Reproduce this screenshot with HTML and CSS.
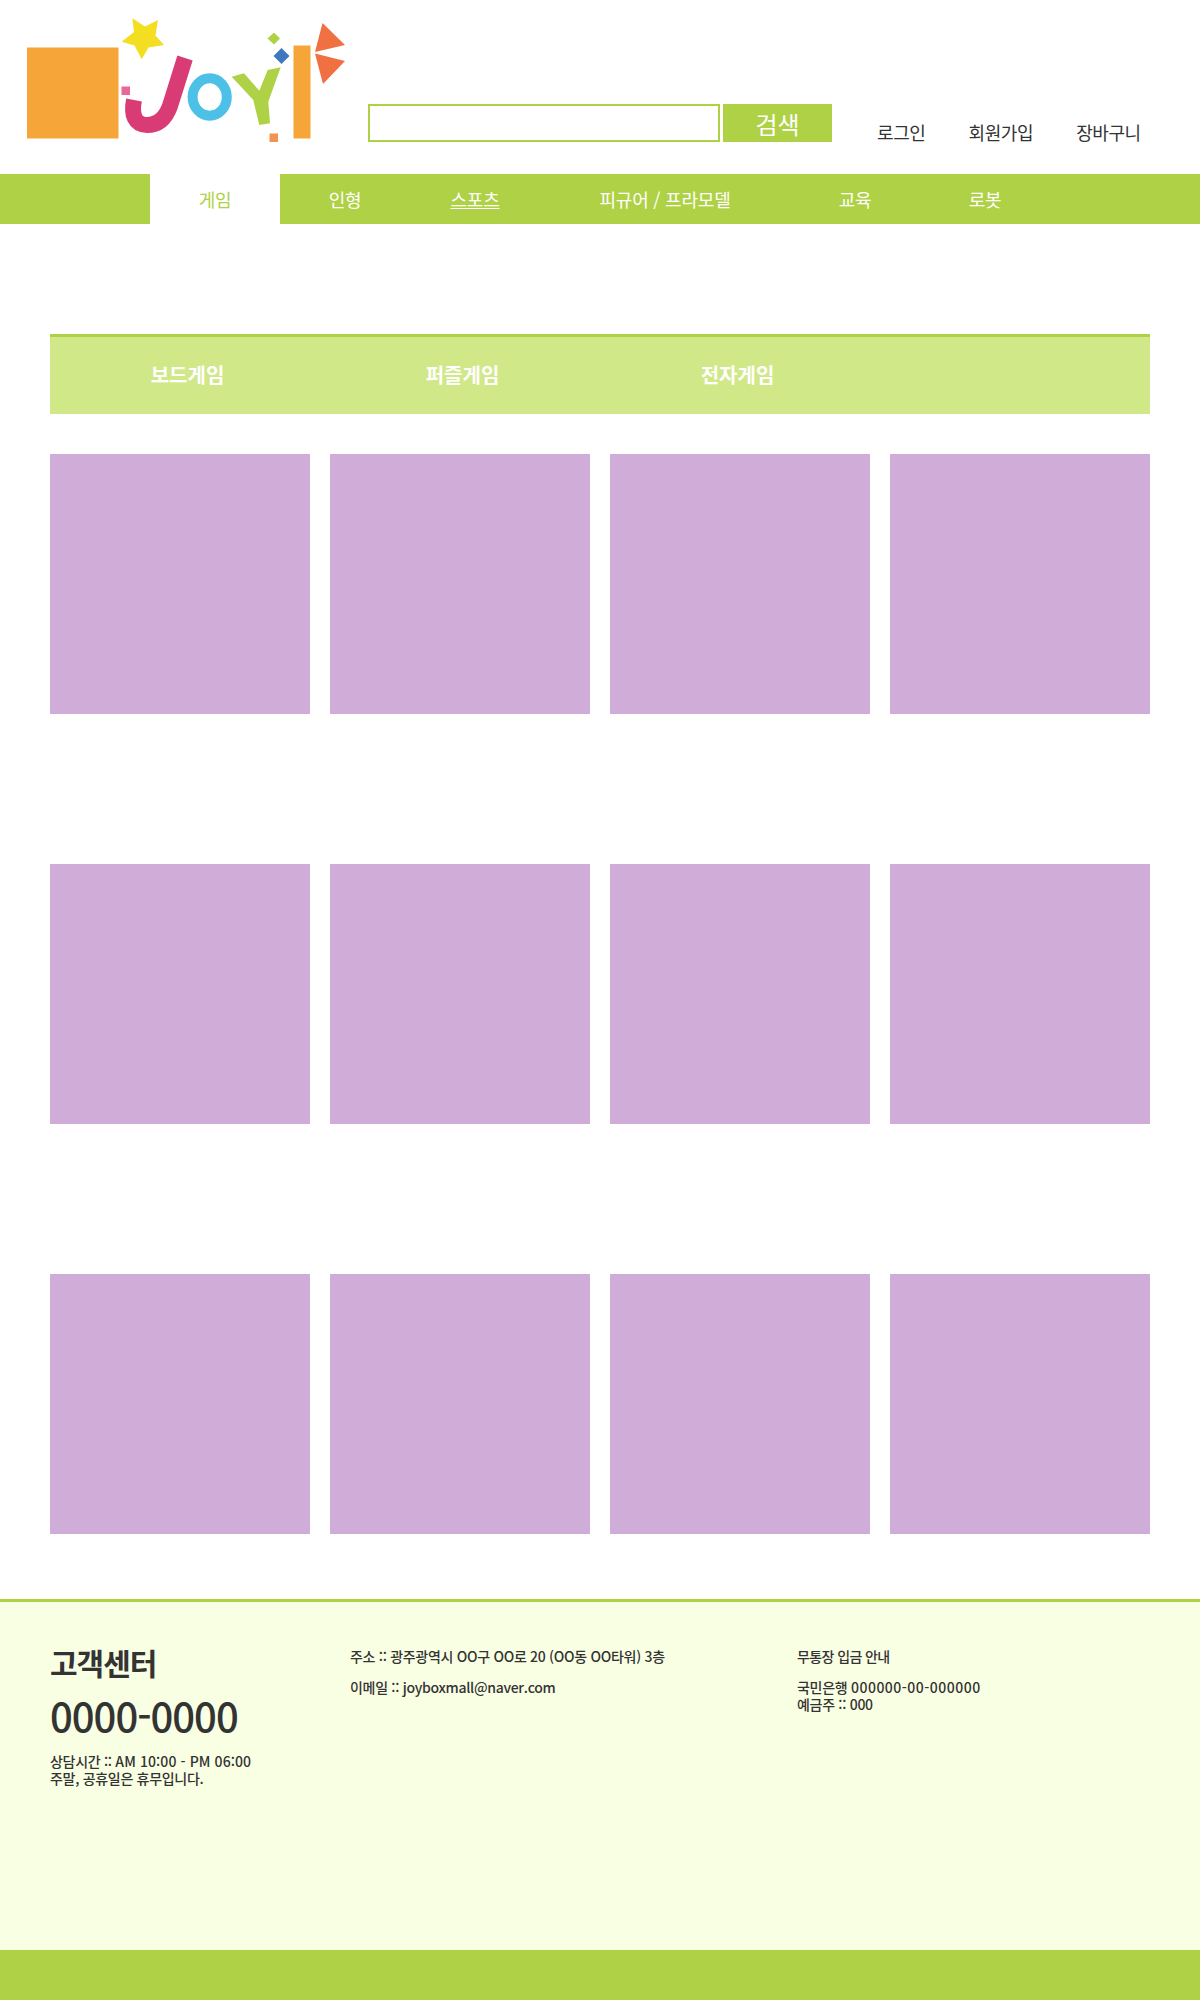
FILE: index.html
```html
<!DOCTYPE html>
<html lang="ko">
<head>
  <meta charset="UTF-8" />
  <title>JOY!</title>
  <link rel="stylesheet" href="styles.css">
</head>
<body>
  <div class="header">
    <svg class="logo" width="360" height="174" viewBox="0 0 360 174">
      <rect x="27" y="47.500" width="91.500" height="91" fill="#f6a638" />
      <polygon points="132.300,18.300 145,26.500 158,20 155.500,35.500 164,45 148.500,47.500 141.700,59.300 134.500,45.500 121.700,41.700 134,32" fill="#f4de21" />
      <rect x="121.500" y="86.500" width="8.500" height="8.500" fill="#e9689a" />
      <path d="M185,58 L170,106 C165,120 157,125 147,125 C135,125 131,115 134,100" fill="none" stroke="#d93b74" stroke-width="16" />
      <ellipse cx="209.700" cy="97" rx="17.100" ry="18.700" fill="none" stroke="#4dc0e8" stroke-width="10" />
      <polygon points="231.700,76.700 244,73.300 259.300,90.700 267.700,70 280.700,67.300 268.300,101.700 270,123.300 259.300,125 253.300,100" fill="#afd145" />
      <polygon points="274,32.500 280,38.500 274,44.500 267.500,38.500" fill="#afd145" />
      <polygon points="281.500,48 289.500,56 281.500,64 273.500,56" fill="#3f78bf" />
      <rect x="269.500" y="133.500" width="8.500" height="8.500" fill="#f39350" />
      <rect x="293.500" y="45.500" width="17" height="93" fill="#f6a638" />
      <polygon points="322.500,23 345,45 315,52" fill="#f07042" />
      <polygon points="315,53.500 345,61 323,84" fill="#f07042" />
    </svg>
    <div class="search">
      <input type="text" class="search-input" />
      <button class="search-btn">검색</button>
    </div>
    <div class="user-menu">
      <a href="#">로그인</a>
      <a href="#">회원가입</a>
      <a href="#">장바구니</a>
    </div>
  </div>

  <div class="nav">
    <a href="#" class="nav-item active">게임</a>
    <a href="#" class="nav-item">인형</a>
    <a href="#" class="nav-item hovered">스포츠</a>
    <a href="#" class="nav-item wide">피규어 / 프라모델</a>
    <a href="#" class="nav-item">교육</a>
    <a href="#" class="nav-item">로봇</a>
  </div>

  <div class="container">
    <div class="sub-nav">
      <a href="#">보드게임</a>
      <a href="#">퍼즐게임</a>
      <a href="#">전자게임</a>
    </div>
    <div class="products">
      <div class="product"></div>
      <div class="product"></div>
      <div class="product"></div>
      <div class="product"></div>
      <div class="product"></div>
      <div class="product"></div>
      <div class="product"></div>
      <div class="product"></div>
      <div class="product"></div>
      <div class="product"></div>
      <div class="product"></div>
      <div class="product"></div>
    </div>
  </div>

  <div class="footer">
    <div class="footer-col col-service">
      <h2>고객센터</h2>
      <p class="phone">0000-0000</p>
      <p>상담시간 :: <span class="num">AM 10:00 - PM 06:00</span><br>주말, 공휴일은 휴무입니다.</p>
    </div>
    <div class="footer-col col-address">
      <p>주소 :: 광주광역시 OO구 OO로 20 (OO동 OO타워) 3층</p>
      <p>이메일 :: joyboxmall@naver.com</p>
    </div>
    <div class="footer-col col-bank">
      <p class="bank-title">무통장 입금 안내</p>
      <p>국민은행 <span class="account">000000-00-000000</span><br>예금주 :: 000</p>
    </div>
  </div>
  <div class="footer-bar"></div>
</body>
</html>
```

FILE: styles.css
```css
* {
  box-sizing: border-box;
}

body {
  margin: 0;
  font-family: "Noto Sans CJK KR", "Noto Sans", sans-serif;
  color: #333;
  background: #fff;
}

a {
  color: inherit;
  text-decoration: none;
}

.header {
  display: flex;
  height: 174px;
}

.logo {
  display: block;
  flex: none;
  margin-right: 8px;
}

.search {
  display: flex;
  margin-top: 104px;
  height: 38px;
}

.search-input {
  width: 352px;
  height: 38px;
  border: 2px solid #afd145;
  background: #fff;
  margin: 0;
}

.search-btn {
  width: 109px;
  height: 38px;
  margin-left: 3px;
  padding: 0;
  border: none;
  background: #afd145;
  color: #fff;
  font-family: inherit;
  font-size: 24px;
}

.user-menu {
  display: flex;
  gap: 43px;
  margin: 118px 0 0 45px;
  font-size: 18px;
  line-height: 28px;
  letter-spacing: -0.4px;
}

.nav {
  display: flex;
  height: 50px;
  padding-left: 150px;
  background: #afd145;
}

.nav-item {
  width: 130px;
  color: #fff;
  font-size: 18px;
  line-height: 50px;
  text-align: center;
  letter-spacing: -0.2px;
}

.nav-item.wide {
  width: 250px;
}

.nav-item.active {
  background: #fff;
  color: #afd145;
}

.nav-item.hovered {
  text-decoration: underline;
}

.container {
  padding: 110px 50px 0;
}

.sub-nav {
  display: flex;
  height: 80px;
  border-top: 3px solid #afd145;
  background: #d1e888;
}

.sub-nav a {
  width: 275px;
  color: #fff;
  font-size: 20px;
  font-weight: 700;
  line-height: 76px;
  text-align: center;
}

.products {
  display: grid;
  grid-template-columns: repeat(4, 260px);
  grid-auto-rows: 260px;
  column-gap: 20px;
  row-gap: 150px;
  margin-top: 40px;
}

.product {
  background: #d0add8;
}

.footer {
  display: flex;
  height: 351px;
  margin-top: 65px;
  padding: 40px 0 0 50px;
  border-top: 3px solid #afd145;
  background: #f9ffe3;
  font-size: 14px;
  font-weight: 500;
  line-height: 17px;
  letter-spacing: -0.3px;
}

.footer p {
  margin: 0;
}

.footer-col h2 {
  margin: 0;
  font-size: 30px;
  font-weight: 700;
  line-height: 40px;
  letter-spacing: -1px;
}

.footer-col .phone {
  margin: 8px 0 13px;
  font-size: 40px;
  line-height: 50px;
  letter-spacing: -1px;
}

.num {
  letter-spacing: 0.1px;
}

.account {
  letter-spacing: 0.5px;
}

.bank-title {
  letter-spacing: -0.6px;
}

.col-service {
  width: 300px;
}

.col-address {
  width: 447px;
}

.col-address,
.col-bank {
  padding-top: 6px;
}

.col-address p + p,
.col-bank p + p {
  margin-top: 14px;
}

.footer-bar {
  height: 50px;
  background: #afd145;
}
```
